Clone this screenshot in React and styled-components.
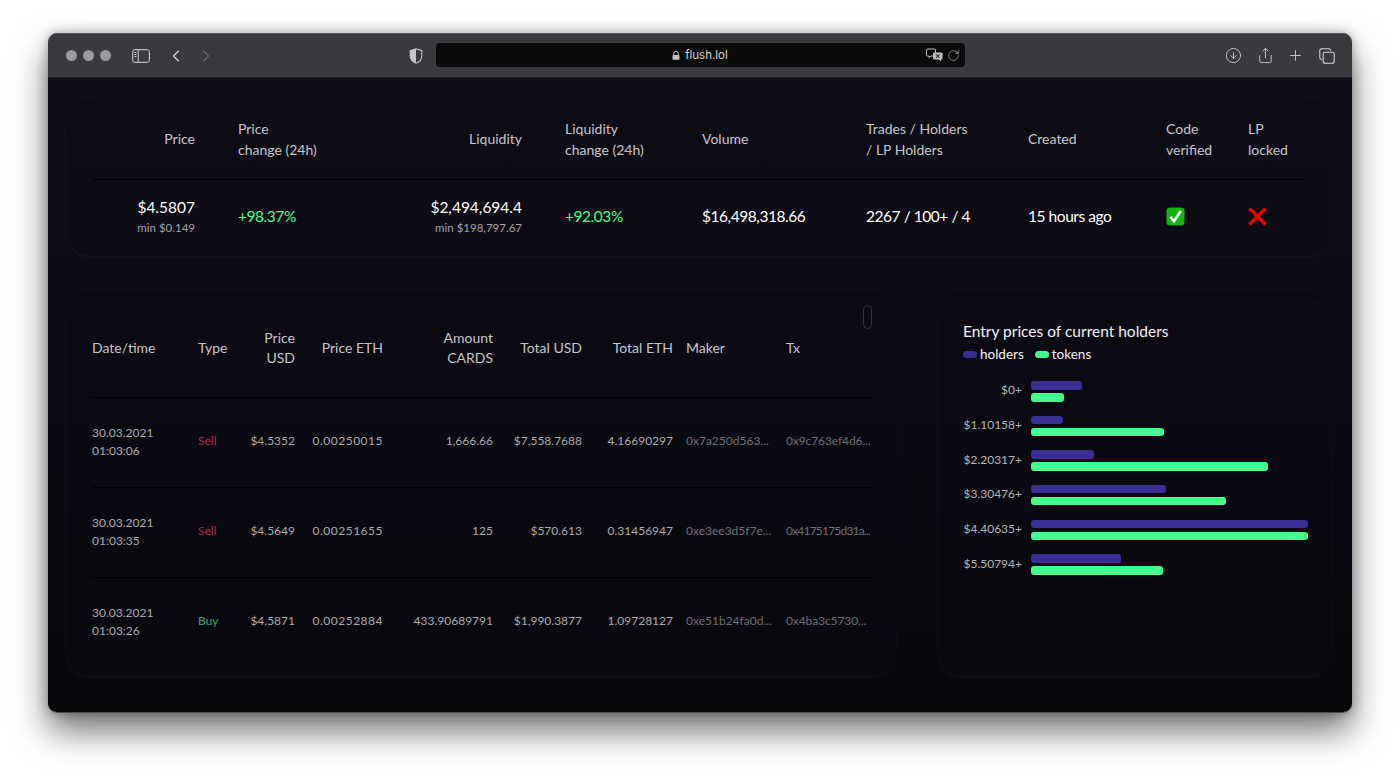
import React from 'react'
import styled, { createGlobalStyle } from 'styled-components'
import { ChevronLeft, ChevronRight, RotateCw, CircleArrowDown, Share, Plus } from 'lucide-react'

const GlobalStyle = createGlobalStyle`
  html, body {
    margin: 0;
    background: #fff;
  }
  * { box-sizing: border-box; }
`

const Page = styled.div`
  width: 1400px;
  height: 777px;
  padding: 33px 48px 64px;
  overflow: hidden;
  font-family: "Lato", "Liberation Sans", sans-serif;
`

const Browser = styled.div`
  height: 680px;
  display: flex;
  flex-direction: column;
  border-radius: 9px;
  border-bottom: 1px solid #4a4a4d;
  overflow: hidden;
  box-shadow: 0 18px 34px rgba(0, 0, 0, 0.55), 0 0 12px rgba(0, 0, 0, 0.3);
`

const TitleBar = styled.header`
  height: 45px;
  flex: none;
  display: grid;
  grid-template-columns: 1fr 529px 1fr;
  align-items: center;
  background: #3a393d;
  border-top: 1px solid #55545a;
  border-bottom: 1px solid #1d1c20;
  color: #cfcfd2;
`

const BarSide = styled.div`
  display: flex;
  align-items: center;
  height: 100%;
`

const Lights = styled.div`
  display: flex;
  gap: 6px;
  margin-left: 18px;
`

const Light = styled.span`
  width: 11px;
  height: 11px;
  border-radius: 50%;
  background: #9a999d;
`

const BarIcon = styled.span`
  display: flex;
  color: ${p => p.$dim ? '#6a696d' : '#d6d6d8'};
  margin-left: ${p => p.$gap || 0}px;
`

const UrlField = styled.div`
  height: 24px;
  position: relative;
  margin-top: -1px;
  display: flex;
  align-items: center;
  justify-content: center;
  gap: 5px;
  background: #0b0b0c;
  border-radius: 4px;
  color: #d4d4d6;
  font-size: 11.5px;
  font-family: "Inter", "Liberation Sans", sans-serif;
`

const UrlTools = styled.div`
  position: absolute;
  right: 5px;
  top: 5px;
  display: flex;
  align-items: center;
  gap: 4px;
`

const Content = styled.main`
  flex: 1;
  display: flex;
  flex-direction: column;
  gap: 40px;
  padding: 25px 20px 0 18px;
  background: linear-gradient(180deg, #0f0d18 0%, #0b0a12 55%, #08080b 100%);
`

const Card = styled.section`
  position: relative;
  border-radius: 26px;
  background: rgba(12, 11, 20, 0.3);
  box-shadow:
    inset 0 0 0 1px rgba(255, 255, 255, 0.008),
    0 2px 3px rgba(255, 255, 255, 0.04),
    -2px 0 3px rgba(255, 255, 255, 0.025),
    2px 0 3px rgba(255, 255, 255, 0.015),
    0 -2px 3px rgba(0, 0, 0, 0.3);
`

const StatsCard = styled(Card)`
  height: 153px;
  padding: 0 26px 0 27px;
`

const StatsGrid = styled.div`
  display: grid;
  grid-template-columns: 145px 162px 165px 137px 164px 162px 138px 82px 58px;
`

const StatsHead = styled.div`
  height: 77px;
  display: flex;
  align-items: center;
  justify-content: ${p => p.$right ? 'flex-end' : 'flex-start'};
  padding-right: ${p => p.$right ? 43 : 0}px;
  padding-bottom: 5px;
  border-bottom: 1px solid #000;
  color: #c6c6ca;
  font-size: 14px;
  line-height: 21px;
`

const StatsCell = styled.div`
  height: 74px;
  padding-bottom: 2px;
  display: flex;
  flex-direction: column;
  justify-content: center;
  align-items: ${p => p.$right ? 'flex-end' : 'flex-start'};
  padding-right: ${p => p.$right ? 43 : 0}px;
  color: ${p => p.$up ? '#41ff8e' : '#fff'};
  font-size: 15.5px;
  letter-spacing: ${p => p.$right ? 0 : -0.45}px;
`

const MinNote = styled.small`
  color: #a2a2a8;
  font-size: 11.5px;
  margin-top: 5px;
`

const Row = styled.div`
  display: grid;
  grid-template-columns: 831px 1fr;
  column-gap: 41px;
`

const TradesCard = styled(Card)`
  height: 380px;
  padding: 4px 25px 0 26px;
  overflow: hidden;
`

const Scrollbar = styled.span`
  position: absolute;
  top: 9px;
  right: 25px;
  width: 9px;
  height: 24px;
  border-radius: 5px;
  border: 1px solid #34343d;
`

const TradesRow = styled.div`
  display: grid;
  grid-template-columns: 106px 52px 45px 88px 110px 89px 91px 113px 86px;
  height: ${p => p.$head ? 98 : 90}px;
  padding-bottom: ${p => p.$head ? 2 : 4}px;
  align-items: center;
  border-bottom: 1px solid #000;
  &:last-child { border-bottom: 0; }
`

const HeadCell = styled.div`
  text-align: ${p => p.$right ? 'right' : 'left'};
  padding-left: ${p => p.$pad ? 13 : 0}px;
  color: #c6c6ca;
  font-size: 14px;
  line-height: 20px;
  white-space: nowrap;
`

const TradeCell = styled.div`
  text-align: ${p => p.$right ? 'right' : 'left'};
  padding-left: ${p => p.$pad ? 13 : 0}px;
  color: ${p => p.$color || '#a9a9ae'};
  font-size: 12px;
  line-height: 18px;
  letter-spacing: ${p => p.$track || 0}px;
  white-space: nowrap;
`

const DateCell = styled(TradeCell)`
  padding-top: 2px;
`

const ChartCard = styled(Card)`
  height: 380px;
  padding: 25px 24px 0 25px;
`

const ChartTitle = styled.h2`
  margin: 0;
  color: #f2f2f4;
  font-size: 15.5px;
  font-weight: 400;
  line-height: 20px;
`

const Legend = styled.div`
  display: flex;
  align-items: center;
  margin-top: 3px;
  gap: 11px;
  color: #f2f2f4;
  font-size: 13.5px;
  line-height: 20px;
`

const LegendItem = styled.span`
  display: flex;
  align-items: center;
  gap: 3px;
`

const Swatch = styled.i`
  width: 14px;
  height: 7px;
  border-radius: 4px;
  background: ${p => p.$color};
`

const Bars = styled.div`
  display: flex;
  flex-direction: column;
  gap: 14.17px;
  margin-top: 17px;
`

const BarRow = styled.div`
  display: grid;
  grid-template-columns: 59px 277px;
  column-gap: 9px;
  align-items: center;
`

const BarLabel = styled.span`
  text-align: right;
  color: #b4b4b8;
  font-size: 12px;
  white-space: nowrap;
  margin-bottom: 3px;
`

const BarPair = styled.div`
  display: flex;
  flex-direction: column;
  gap: 3.5px;
`

const Bar = styled.div`
  height: 8.5px;
  border-radius: 3px;
  background: ${p => p.$color};
`

const PURPLE = '#3a2f96'
const GREEN = '#41ff8e'
const RED = '#b2294e'
const BUY = '#35a860'

const statsHeads = [
  { text: 'Price', right: true },
  { text: <>Price<br />change (24h)</> },
  { text: 'Liquidity', right: true },
  { text: <>Liquidity<br />change (24h)</> },
  { text: 'Volume' },
  { text: <>Trades / Holders<br />/ LP Holders</> },
  { text: 'Created' },
  { text: <>Code<br />verified</> },
  { text: <>LP<br />locked</> },
]

const trades = [
  ['30.03.2021', '01:03:06', 'Sell', '$4.5352', '0.00250015', '1,666.66', '$7,558.7688', '4.16690297', '0x7a250d563...', '0x9c763ef4d6...'],
  ['30.03.2021', '01:03:35', 'Sell', '$4.5649', '0.00251655', '125', '$570.613', '0.31456947', '0xe3ee3d5f7e...', '0x4175175d31a...'],
  ['30.03.2021', '01:03:26', 'Buy', '$4.5871', '0.00252884', '433.90689791', '$1,990.3877', '1.09728127', '0xe51b24fa0d...', '0x4ba3c5730...'],
]

const buckets = [
  ['$0+', 51, 33],
  ['$1.10158+', 32, 133],
  ['$2.20317+', 63, 237],
  ['$3.30476+', 135, 195],
  ['$4.40635+', 277, 277],
  ['$5.50794+', 90, 132],
]

const SidebarIcon = () => (
  <svg width="18" height="14" viewBox="0 0 18 14" fill="none" stroke="currentColor">
    <rect x="0.7" y="0.7" width="16.6" height="12.6" rx="2" strokeWidth="1" />
    <path d="M6.2 1v12" strokeWidth="1" />
    <path d="M2.4 3.5h2M2.4 5.5h2M2.4 7.5h2" strokeWidth="1" />
  </svg>
)

const ShieldIcon = () => (
  <svg width="14" height="16" viewBox="0 0 14 16">
    <path d="M7 .8 12.8 2.6V8c0 3.4-2.6 5.9-5.8 7.2C3.8 13.9 1.2 11.4 1.2 8V2.6Z" fill="none" stroke="#c4c4c6" strokeWidth="1.1" />
    <path d="M7 .8 1.2 2.6V8c0 3.4 2.6 5.9 5.8 7.2Z" fill="#c4c4c6" />
  </svg>
)

const LockIcon = () => (
  <svg width="8" height="11" viewBox="0 0 9 11">
    <path d="M2 5V3.3a2.5 2.5 0 0 1 5 0V5" fill="none" stroke="#c4c4c6" strokeWidth="1.1" />
    <rect x="0.6" y="4.8" width="7.8" height="5.6" rx="1" fill="#c4c4c6" />
  </svg>
)

const TranslateIcon = () => (
  <svg width="17" height="14" viewBox="0 0 17 14">
    <path d="M1.5 1h7a1 1 0 0 1 1 1v5a1 1 0 0 1-1 1H5L3 9.6V8H1.5a1 1 0 0 1-1-1V2a1 1 0 0 1 1-1Z" fill="none" stroke="#bdbdc0" strokeWidth="1" />
    <path d="M8 4.5h7.5a1 1 0 0 1 1 1v5a1 1 0 0 1-1 1H15v2l-2.4-2H8a1 1 0 0 1-1-1v-5a1 1 0 0 1 1-1Z" fill="#bdbdc0" />
    <path d="M10 6.2l3.4 3.8M13.4 6.2 10 10" stroke="#0b0b0c" strokeWidth="1" />
  </svg>
)

const TabsIcon = () => (
  <svg width="16" height="16" viewBox="0 0 16 16" fill="none" stroke="currentColor" strokeWidth="1.1">
    <rect x="4.2" y="4.2" width="11" height="11" rx="2" />
    <path d="M2.6 11.6A2 2 0 0 1 .8 9.6V2.8a2 2 0 0 1 2-2h6.8a2 2 0 0 1 2 1.8" />
  </svg>
)

const CheckEmoji = () => (
  <svg width="19" height="19" viewBox="0 0 19 19" role="img" aria-label="yes">
    <rect x="0.5" y="0.5" width="18" height="18" rx="3.5" fill="#12b312" />
    <path d="M4.4 9.8 8 14.2 14.8 4" fill="none" stroke="#fff" strokeWidth="2.6" />
  </svg>
)

const CrossEmoji = () => (
  <svg width="19" height="19" viewBox="0 0 19 19" role="img" aria-label="no">
    <path d="M1.5 1.5 17.5 17.5M17.5 1.5 1.5 17.5" stroke="#e60000" strokeWidth="3.6" />
  </svg>
)

const App = () => {
  return (
    <Page>
      <GlobalStyle />
      <Browser>
        <TitleBar>
          <BarSide>
            <Lights><Light /><Light /><Light /></Lights>
            <BarIcon $gap={21}><SidebarIcon /></BarIcon>
            <BarIcon $gap={16}><ChevronLeft size={20} strokeWidth={1.4} /></BarIcon>
            <BarIcon $gap={10} $dim><ChevronRight size={20} strokeWidth={1.4} /></BarIcon>
            <BarIcon $gap={193}><ShieldIcon /></BarIcon>
          </BarSide>
          <UrlField>
            <LockIcon />
            <span>flush.lol</span>
            <UrlTools>
              <TranslateIcon />
              <RotateCw size={13} strokeWidth={1.2} color="#bdbdc0" />
            </UrlTools>
          </UrlField>
          <BarSide>
            <BarIcon $gap={260}><CircleArrowDown size={17} strokeWidth={1.2} /></BarIcon>
            <BarIcon $gap={15}><Share size={17} strokeWidth={1.2} /></BarIcon>
            <BarIcon $gap={13}><Plus size={17} strokeWidth={1.2} /></BarIcon>
            <BarIcon $gap={15}><TabsIcon /></BarIcon>
          </BarSide>
        </TitleBar>
        <Content>
          <StatsCard>
            <StatsGrid>
              {statsHeads.map((h, i) => (
                <StatsHead key={i} $right={h.right}><div>{h.text}</div></StatsHead>
              ))}
              <StatsCell $right>$4.5807<MinNote>min $0.149</MinNote></StatsCell>
              <StatsCell $up>+98.37%</StatsCell>
              <StatsCell $right>$2,494,694.4<MinNote>min $198,797.67</MinNote></StatsCell>
              <StatsCell $up>+92.03%</StatsCell>
              <StatsCell>$16,498,318.66</StatsCell>
              <StatsCell>2267 / 100+ / 4</StatsCell>
              <StatsCell>15 hours ago</StatsCell>
              <StatsCell><CheckEmoji /></StatsCell>
              <StatsCell><CrossEmoji /></StatsCell>
            </StatsGrid>
          </StatsCard>
          <Row>
            <TradesCard>
              <Scrollbar />
              <TradesRow $head>
                <HeadCell>Date/time</HeadCell>
                <HeadCell>Type</HeadCell>
                <HeadCell $right>Price<br />USD</HeadCell>
                <HeadCell $right>Price ETH</HeadCell>
                <HeadCell $right>Amount<br />CARDS</HeadCell>
                <HeadCell $right>Total USD</HeadCell>
                <HeadCell $right>Total ETH</HeadCell>
                <HeadCell $pad>Maker</HeadCell>
                <HeadCell>Tx</HeadCell>
              </TradesRow>
              {trades.map(t => (
                <TradesRow key={t[1]}>
                  <DateCell>{t[0]}<br />{t[1]}</DateCell>
                  <TradeCell $color={t[2] === 'Buy' ? BUY : RED}>{t[2]}</TradeCell>
                  <TradeCell $right>{t[3]}</TradeCell>
                  <TradeCell $right $track={0.5}>{t[4]}</TradeCell>
                  <TradeCell $right>{t[5]}</TradeCell>
                  <TradeCell $right>{t[6]}</TradeCell>
                  <TradeCell $right>{t[7]}</TradeCell>
                  <TradeCell $pad $color="#6f6f76">{t[8]}</TradeCell>
                  <TradeCell $color="#6f6f76" $track={t[9].length > 15 ? -0.8 : -0.1}>{t[9]}</TradeCell>
                </TradesRow>
              ))}
            </TradesCard>
            <ChartCard>
              <ChartTitle>Entry prices of current holders</ChartTitle>
              <Legend>
                <LegendItem><Swatch $color={PURPLE} />holders</LegendItem>
                <LegendItem><Swatch $color={GREEN} />tokens</LegendItem>
              </Legend>
              <Bars>
                {buckets.map(([label, holders, tokens]) => (
                  <BarRow key={label}>
                    <BarLabel>{label}</BarLabel>
                    <BarPair>
                      <Bar $color={PURPLE} style={{ width: holders }} />
                      <Bar $color={GREEN} style={{ width: tokens }} />
                    </BarPair>
                  </BarRow>
                ))}
              </Bars>
            </ChartCard>
          </Row>
        </Content>
      </Browser>
    </Page>
  )
}

export default App
